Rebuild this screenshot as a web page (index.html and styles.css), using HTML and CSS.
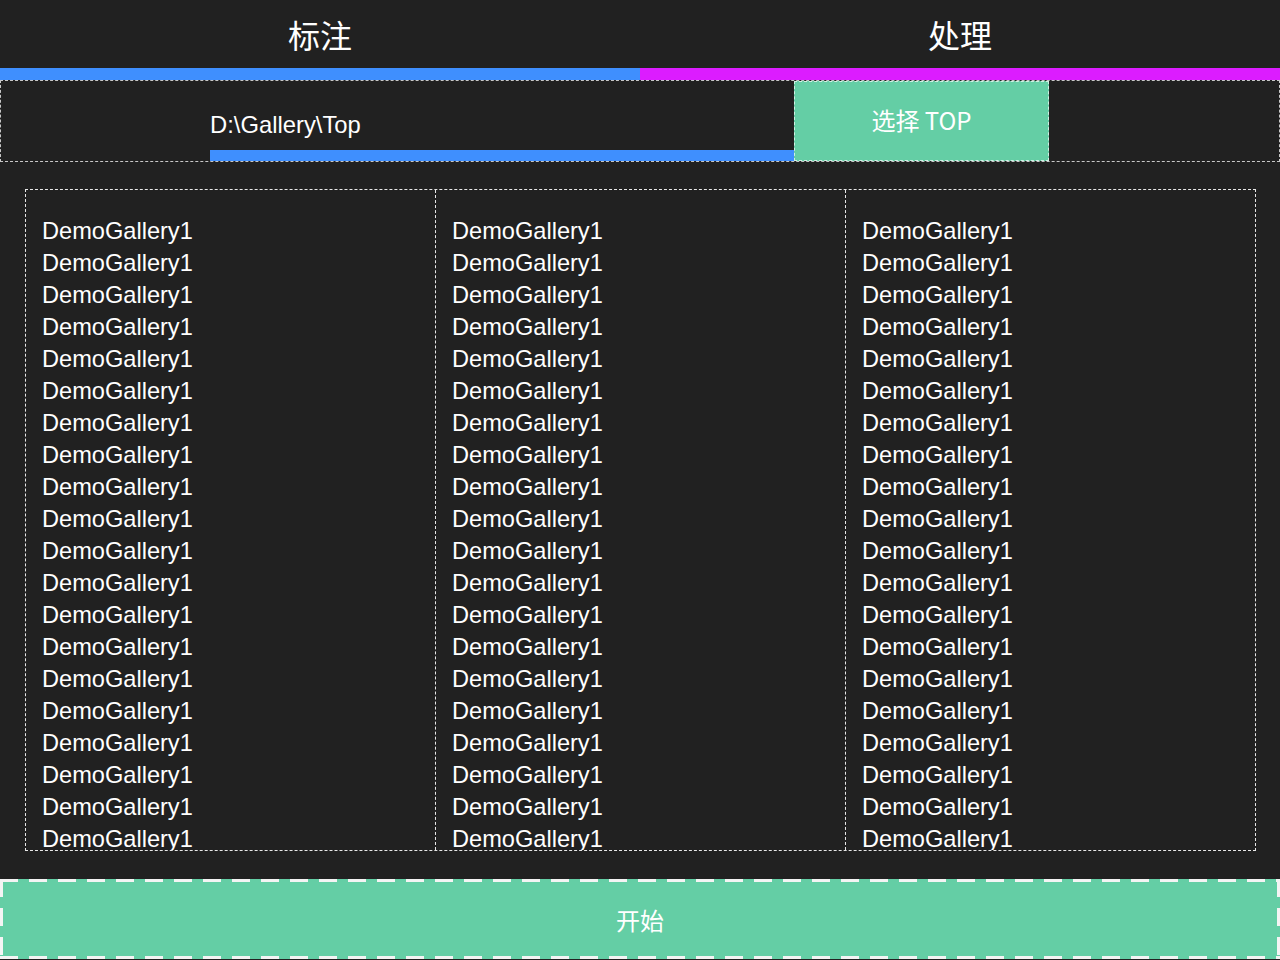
FILE: index.html
```html
<!DOCTYPE html>
<html lang="zh">
<head>
<meta charset="utf-8">
<title>标注 处理</title>
<link rel="stylesheet" href="styles.css">
</head>
<body>
<div class="tabs">
  <div class="tab tab-blue">标注</div>
  <div class="tab tab-magenta">处理</div>
</div>
<div class="pick-row">
  <div class="path-field">D:\Gallery\Top</div>
  <div class="pick-btn">选择 TOP</div>
</div>
<div class="list">
  <div class="col">
    <div class="item">DemoGallery1</div><div class="item">DemoGallery1</div><div class="item">DemoGallery1</div><div class="item">DemoGallery1</div><div class="item">DemoGallery1</div><div class="item">DemoGallery1</div><div class="item">DemoGallery1</div><div class="item">DemoGallery1</div><div class="item">DemoGallery1</div><div class="item">DemoGallery1</div><div class="item">DemoGallery1</div><div class="item">DemoGallery1</div><div class="item">DemoGallery1</div><div class="item">DemoGallery1</div><div class="item">DemoGallery1</div><div class="item">DemoGallery1</div><div class="item">DemoGallery1</div><div class="item">DemoGallery1</div><div class="item">DemoGallery1</div><div class="item">DemoGallery1</div>
  </div>
  <div class="col">
    <div class="item">DemoGallery1</div><div class="item">DemoGallery1</div><div class="item">DemoGallery1</div><div class="item">DemoGallery1</div><div class="item">DemoGallery1</div><div class="item">DemoGallery1</div><div class="item">DemoGallery1</div><div class="item">DemoGallery1</div><div class="item">DemoGallery1</div><div class="item">DemoGallery1</div><div class="item">DemoGallery1</div><div class="item">DemoGallery1</div><div class="item">DemoGallery1</div><div class="item">DemoGallery1</div><div class="item">DemoGallery1</div><div class="item">DemoGallery1</div><div class="item">DemoGallery1</div><div class="item">DemoGallery1</div><div class="item">DemoGallery1</div><div class="item">DemoGallery1</div>
  </div>
  <div class="col">
    <div class="item">DemoGallery1</div><div class="item">DemoGallery1</div><div class="item">DemoGallery1</div><div class="item">DemoGallery1</div><div class="item">DemoGallery1</div><div class="item">DemoGallery1</div><div class="item">DemoGallery1</div><div class="item">DemoGallery1</div><div class="item">DemoGallery1</div><div class="item">DemoGallery1</div><div class="item">DemoGallery1</div><div class="item">DemoGallery1</div><div class="item">DemoGallery1</div><div class="item">DemoGallery1</div><div class="item">DemoGallery1</div><div class="item">DemoGallery1</div><div class="item">DemoGallery1</div><div class="item">DemoGallery1</div><div class="item">DemoGallery1</div><div class="item">DemoGallery1</div>
  </div>
</div>
<div class="start-btn">开始</div>
</body>
</html>
```
FILE: styles.css
```css
html, body {
  margin: 0;
  padding: 0;
  background: #212121;
  color: #ffffff;
  width: 1280px;
  height: 960px;
  overflow: hidden;
}

.tabs {
  display: flex;
  height: 80px;
}

.tab {
  flex: 1;
  box-sizing: border-box;
  height: 80px;
  padding-bottom: 1px;
  display: flex;
  align-items: center;
  justify-content: center;
  font-family: "Noto Sans CJK SC", sans-serif;
  font-size: 32px;
  color: #ffffff;
}

.tab-blue { border-bottom: 12px solid #3f8ffe; }
.tab-magenta { border-bottom: 12px solid #dc1cff; }

.pick-row {
  display: flex;
  height: 80px;
  border: 1px dashed #c8c8c8;
}

.path-field {
  box-sizing: border-box;
  margin-left: 209px;
  width: 584px;
  height: 80px;
  padding-top: 29px;
  border-bottom: 11px solid #3f8ffe;
  font-family: "Liberation Sans", Arial, sans-serif;
  font-size: 23.8px;
  line-height: 30px;
  color: #ffffff;
}

.pick-btn {
  box-sizing: border-box;
  width: 255px;
  height: 80px;
  background: #64cea5;
  border: 1px dashed rgba(255, 255, 255, 0.7);
  display: flex;
  align-items: center;
  justify-content: center;
  padding-bottom: 4px;
  font-family: "Noto Sans CJK SC", sans-serif;
  font-size: 24px;
  color: #ffffff;
}

.list {
  display: flex;
  margin: 27px 24px 0 25px;
  height: 660px;
  border: 1px dashed #e8e8e8;
  overflow: hidden;
}

.col {
  flex: 1;
  box-sizing: border-box;
  padding: 25px 0 0 16px;
  overflow: hidden;
}

.col + .col {
  border-left: 1px dashed #e8e8e8;
}

.item {
  font-family: "Liberation Sans", Arial, sans-serif;
  font-size: 23.6px;
  line-height: 32px;
  color: #ffffff;
  white-space: nowrap;
}

.start-btn {
  box-sizing: border-box;
  margin-top: 28px;
  height: 80px;
  background:
    repeating-linear-gradient(90deg, #f4f4f4 0 18px, transparent 18px 29px) left top / 100% 3px no-repeat,
    repeating-linear-gradient(90deg, #f4f4f4 0 18px, transparent 18px 29px) left bottom / 100% 3px no-repeat,
    repeating-linear-gradient(180deg, #f4f4f4 0 18px, transparent 18px 29px) left top / 3px 100% no-repeat,
    repeating-linear-gradient(180deg, #f4f4f4 0 18px, transparent 18px 29px) right top / 3px 100% no-repeat,
    #64cea5;
  display: flex;
  align-items: center;
  justify-content: center;
  font-family: "Noto Sans CJK SC", sans-serif;
  font-size: 24px;
  color: #ffffff;
}
```
